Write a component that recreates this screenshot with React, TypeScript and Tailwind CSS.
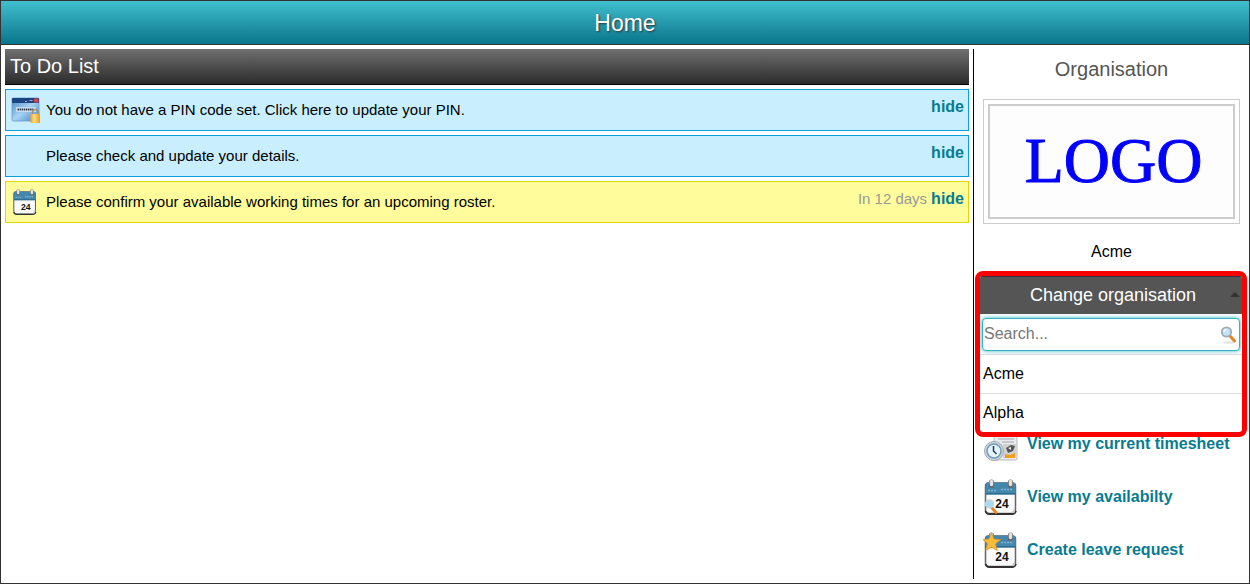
import { useState, type ReactNode } from 'react';

const todos = [
    { id: 1, icon: 'pin', text: 'You do not have a PIN code set. Click here to update your PIN.', due: '', tone: 'border-[#0a9fdc] bg-[#c9efff]' },
    { id: 2, icon: '', text: 'Please check and update your details.', due: '', tone: 'border-[#0a9fdc] bg-[#c9efff]' },
    { id: 3, icon: 'calendar', text: 'Please confirm your available working times for an upcoming roster.', due: 'In 12 days', tone: 'border-[#e0d800] bg-[#fffc9c]' },
];

const organisations = ['Acme', 'Alpha'];

function PinIcon() {
    return (
        <svg viewBox="0 0 30 28" className="h-7 w-[30px]" aria-hidden="true">
            <defs>
                <linearGradient id="pinWindow" x1="0" y1="0" x2="1" y2="1">
                    <stop offset="0" stopColor="#3f83c4" />
                    <stop offset="0.5" stopColor="#a9d2f3" />
                    <stop offset="1" stopColor="#3a83c9" />
                </linearGradient>
                <linearGradient id="pinLock" x1="0" y1="0" x2="1" y2="0">
                    <stop offset="0" stopColor="#f5a02c" />
                    <stop offset="0.4" stopColor="#ffdc7c" />
                    <stop offset="1" stopColor="#f09818" />
                </linearGradient>
            </defs>
            <rect x="1" y="2" width="27" height="23" rx="1" fill="url(#pinWindow)" stroke="#6d9dc9" strokeWidth="0.8" />
            <path d="M1 7V3q0-1 1-1h25q1 0 1 1v4z" fill="#1c4480" />
            <path d="M14 5.500h2M18.500 4.500h3" stroke="#8db3dc" strokeWidth="1" />
            <rect x="23" y="2.500" width="4.500" height="4" rx="0.500" fill="#d0454c" />
            <rect x="5" y="11" width="20" height="5" fill="#dbe9f3" stroke="#8eb5d6" strokeWidth="0.5" />
            <path d="M6.500 13.500h16" stroke="#283848" strokeWidth="2" strokeDasharray="1.5 0.6" />
            <path d="M21.500 19v-2.500a3 3 0 0 1 6 0V19" fill="none" stroke="#a48e76" strokeWidth="1.600" />
            <rect x="19.500" y="18" width="9.500" height="9" rx="0.800" fill="url(#pinLock)" />
        </svg>
    );
}

function CalendarIcon({ className, children }: { className: string; children?: ReactNode }) {
    return (
        <svg viewBox="0 0 36 36" className={className} aria-hidden="true">
            <rect x="2.500" y="4" width="30" height="30.500" rx="3" fill="#fafafa" stroke="#666" strokeWidth="1.500" />
            <path d="M2.500 32q1 3 3.500 3h23q3 0 4-3" fill="none" stroke="#333" strokeWidth="1.800" />
            <path d="M2.500 15.500V6q0-2.500 2.500-2.500h25q2.500 0 2.500 2.500v9.500z" fill="#4487ac" />
            <path d="M2.500 14h30v1.500h-30z" fill="#2e6c92" />
            <path d="M5 11.500h8M18 10.500h11" stroke="#83b5ce" strokeWidth="1.500" strokeDasharray="2 1" />
            <path d="M8.500 6.500V3M27.500 6.500V3" stroke="#666" strokeWidth="5" strokeLinecap="round" />
            <path d="M8.500 5.500V2.500M27.500 5.500V2.500" stroke="#e2e2e2" strokeWidth="3.500" strokeLinecap="round" />
            <path d="m28 34 4-5v3q0 2-1 2z" fill="#c9c9c9" />
            <text x="19" y="29" textAnchor="middle" fontFamily="Liberation Sans, sans-serif" fontWeight="700" fontSize="12" fill="#111">24</text>
            {children}
        </svg>
    );
}

function TimesheetIcon() {
    return (
        <svg viewBox="0 0 36 36" className="size-9" aria-hidden="true">
            <rect x="11" y="1" width="23" height="33" rx="1" fill="#e9eaec" stroke="#bbb" />
            <path d="M15 7h16M15 10h16M15 13h16M19 16h12" stroke="#b9bdc4" strokeWidth="1.300" />
            <rect x="20" y="18" width="13" height="14" fill="#d2d2d2" />
            <path d="m23 22 5-3 4 1-2 5-5 2z" fill="#555" />
            <path d="m25 22 3-1v3z" fill="#eee" />
            <path d="M22 32v-4l5 1 5-2v5z" fill="#f0a020" />
            <circle cx="11" cy="25" r="9.500" fill="#d2d6da" stroke="#a3a9af" />
            <circle cx="11" cy="25" r="7" fill="#e7f3fb" stroke="#6b9bc0" strokeWidth="1.500" />
            <path d="M10.500 20v5l3 3" fill="none" stroke="#1e3c58" strokeWidth="1.500" />
        </svg>
    );
}

function SearchIcon() {
    return (
        <svg viewBox="0 0 18 20" className="h-5 w-[18px]" aria-hidden="true">
            <ellipse cx="10" cy="17.500" rx="6" ry="1.500" fill="#e6e6e6" />
            <path d="m11 11 4.500 5" stroke="#e08624" strokeWidth="3" strokeLinecap="round" />
            <circle cx="7.500" cy="7" r="4.700" fill="#bde7f8" stroke="#a2aab4" strokeWidth="1.800" />
            <path d="M5 7a2.500 2.500 0 0 1 2.500-2.500" fill="none" stroke="#fff" strokeWidth="1.300" />
        </svg>
    );
}

function SideLink({ icon, children }: { icon: ReactNode; children: ReactNode }) {
    return (
        <a href="#" className="flex items-center gap-2 text-base font-bold text-[#087b90]">
            {icon}
            <span>{children}</span>
        </a>
    );
}

function OrganisationPicker() {
    const [open, setOpen] = useState(true);
    const [query, setQuery] = useState('');
    const matches = organisations.filter((name) => name.toLowerCase().includes(query.toLowerCase()));

    return (
        <div className="relative h-12">
            <div className="absolute inset-x-0 top-0 z-10 overflow-hidden rounded-lg border-5 border-[#f00] bg-white">
                <button
                    type="button"
                    aria-expanded={open}
                    onClick={() => setOpen(!open)}
                    className="relative flex h-[38px] w-full items-center justify-center border-t border-[#333] bg-[#555] pb-0.5 pl-1 text-lg text-white"
                >
                    Change organisation
                    <svg viewBox="0 0 10 5" className="absolute right-0.5 h-[5px] w-2.5" aria-hidden="true">
                        <path d="M0 5 5 0l5 5z" fill="#333" />
                    </svg>
                </button>
                {open && (
                    <>
                        <div className="border-b border-[#ddd] px-0.5 pt-1 pb-[3px]">
                            <label className="flex h-[33px] items-center rounded-sm border border-[#33b5c5] bg-white pr-0.5 shadow-[0_0_4px_#33b5c5]">
                                <input
                                    type="text"
                                    aria-label="Search organisations"
                                    placeholder="Search..."
                                    autoFocus
                                    value={query}
                                    onChange={(e) => setQuery(e.target.value)}
                                    className="min-w-0 flex-1 pb-0.5 pl-px text-base text-black outline-none placeholder:text-[#777]"
                                />
                                <SearchIcon />
                            </label>
                        </div>
                        <ul className="divide-y divide-[#ddd]">
                            {matches.map((name) => (
                                <li key={name}>
                                    <button type="button" className="h-[38px] w-full px-[3px] text-left text-base">{name}</button>
                                </li>
                            ))}
                        </ul>
                    </>
                )}
            </div>
        </div>
    );
}

export default function App() {
    const [hidden, setHidden] = useState<number[]>([]);

    return (
        <div className="flex min-h-screen flex-col border border-[#333] bg-white font-['Liberation_Sans',Arial,sans-serif] text-black">
            <header className="flex h-11 items-center justify-center border-b border-[#333] bg-linear-to-b from-[#40bfce] to-[#05768c]">
                <h1 className="text-[23px] leading-7 text-white [text-shadow:1px_1px_2px_#333]">Home</h1>
            </header>

            <div className="flex flex-1 gap-1 py-1 pl-1">
                <main className="flex min-w-0 flex-1 flex-col gap-1">
                    <h2 className="h-9 border-b border-black bg-linear-to-b from-[#707070] to-[#2c2c2c] px-[5px] pt-[3px] text-xl text-white">
                        To Do List
                    </h2>
                    {todos.filter((todo) => !hidden.includes(todo.id)).map((todo) => (
                        <div key={todo.id} className={`flex h-[42px] border pl-[5px] pr-1 ${todo.tone}`}>
                            <div className="flex w-[35px] shrink-0 items-center">
                                {todo.icon === 'pin' && <PinIcon />}
                                {todo.icon === 'calendar' && <CalendarIcon className="ml-px size-[26px]" />}
                            </div>
                            <a href="#" className="flex-1 self-center text-[15px]">{todo.text}</a>
                            <div className="flex items-baseline gap-1 pt-[5px] text-base">
                                {todo.due && <span className="text-[15px] text-[#999]">{todo.due}</span>}
                                <button
                                    type="button"
                                    onClick={() => setHidden([...hidden, todo.id])}
                                    className="font-bold text-[#087b90]"
                                >
                                    hide
                                </button>
                            </div>
                        </div>
                    ))}
                </main>

                <aside className="w-[276px] shrink-0 border-l border-black">
                    <h2 className="pt-1.5 text-center text-xl text-[#555]">Organisation</h2>
                    <div className="mx-[9px] mt-4 border border-[#ccc] p-1">
                        <div className="flex h-[115px] items-center justify-center border-2 border-[#ccc] bg-[#fdfdfd] pb-0.5 pl-1 font-['Liberation_Serif','Times_New_Roman',serif] text-[64px] text-[#00f] [-webkit-text-stroke:1px_#00f]">
                            LOGO
                        </div>
                    </div>
                    <p className="mt-4 mb-[7px] text-center text-base">Acme</p>
                    <div className="mr-0.5 ml-px">
                        <OrganisationPicker />
                    </div>
                    <nav className="mt-[107px] flex flex-col gap-[17px] px-[9px]">
                        <SideLink icon={<TimesheetIcon />}>View my current timesheet</SideLink>
                        <SideLink
                            icon={
                                <CalendarIcon className="size-9">
                                    <path d="m9 29 4 4.500" stroke="#e08624" strokeWidth="2.800" strokeLinecap="round" />
                                    <circle cx="6.500" cy="25" r="4" fill="#a5dcf4" stroke="#c3d3dd" strokeWidth="1.500" />
                                </CalendarIcon>
                            }
                        >
                            View my availabilty
                        </SideLink>
                        <SideLink
                            icon={
                                <CalendarIcon className="size-9">
                                    <path d="m8.500 1 2.600 6 6.900.5-5.500 4.300 1.800 6.700-5.800-3.300-5.900 3.300 1.800-6.700L0 7.500 5.900 7z" fill="#f8bc3c" stroke="#d18b1c" strokeWidth="0.700" />
                                </CalendarIcon>
                            }
                        >
                            Create leave request
                        </SideLink>
                    </nav>
                </aside>
            </div>
        </div>
    );
}
